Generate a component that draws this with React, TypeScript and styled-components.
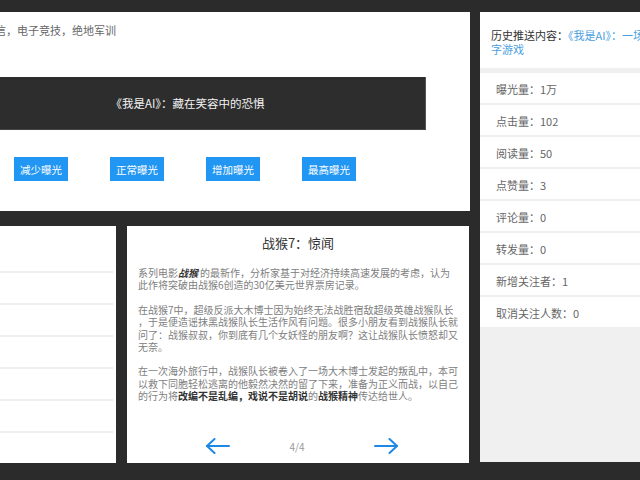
import React from "react";
import styled, { createGlobalStyle } from "styled-components";

const GlobalStyle = createGlobalStyle`
  html, body {
    margin: 0;
    padding: 0;
    background: #2b2b2b;
    overflow: hidden;
  }
  body {
    font-family: "Noto Sans CJK SC", "Noto Sans", sans-serif;
  }
`;

const Page = styled.div`
  width: 640px;
  height: 480px;
  overflow: hidden;
  background: #2b2b2b;
`;

const Layout = styled.div`
  display: grid;
  grid-template-columns: 520px 190px;
  column-gap: 10px;
  margin-left: -50px;
  padding-top: 12px;
`;

const MainColumn = styled.div`
  display: flex;
  flex-direction: column;
  gap: 15px;
`;

const TopPanel = styled.section`
  height: 199px;
  background: #fff;
  overflow: hidden;
  display: flex;
  flex-direction: column;
`;

const Tags = styled.div`
  padding: 11px 0 0 34px;
  font-size: 11px;
  line-height: 14px;
  color: #666;
  white-space: nowrap;
`;

const TitleBar = styled.div`
  margin-top: 40px;
  width: 476px;
  height: 53px;
  box-sizing: border-box;
  background: #2d2d2d;
  border-right: 1px solid #555;
  border-bottom: 1px solid #444;
  display: flex;
  align-items: center;
  justify-content: center;
  color: #f2f2f2;
  font-size: 11.5px;
`;

const ButtonRow = styled.div`
  display: flex;
  gap: 42px;
  padding-left: 64px;
  margin-top: 27px;
`;

const ExposureButton = styled.button`
  width: 54px;
  height: 24px;
  padding: 0;
  border: none;
  background: #2196f3;
  color: #fff;
  font-family: inherit;
  font-size: 10.5px;
  cursor: pointer;
`;

const BottomRow = styled.div`
  display: grid;
  grid-template-columns: 166px 342px;
  column-gap: 11px;
  height: 236px;
`;

const ListPanel = styled.section`
  background: #fff;
  display: flex;
  flex-direction: column;
`;

const ListHead = styled.div`
  height: 45px;
  border-bottom: 2px solid #eeeeee;
  margin-right: 3px;
`;

const ListRow = styled.div<{ $last?: boolean }>`
  height: 30px;
  margin-right: 3px;
  border-bottom: ${(p) => (p.$last ? "none" : "2px solid #eeeeee")};
`;

const Article = styled.section`
  background: #fff;
  padding: 8px 11px 0;
  display: flex;
  flex-direction: column;
  box-sizing: border-box;
`;

const ArticleTitle = styled.h2`
  margin: 0 0 15px;
  text-align: center;
  font-size: 13px;
  line-height: 18px;
  font-weight: normal;
  color: #333;
`;

const Para = styled.p`
  margin: 0 0 12px;
  font-size: 10px;
  line-height: 12.4px;
  color: #808080;
  white-space: nowrap;
`;

const Strong = styled.b<{ $italic?: boolean }>`
  color: #333;
  font-weight: bold;
  font-style: ${(p) => (p.$italic ? "italic" : "normal")};
  margin-right: ${(p) => (p.$italic ? "2px" : "0")};
`;

const Pager = styled.div`
  margin-top: auto;
  height: 34px;
  display: flex;
  align-items: center;
  padding-left: 67px;
`;

const PageNo = styled.span`
  font-size: 10px;
  color: #999;
  width: 20px;
  text-align: center;
  margin: 0 66px 0 56px;
`;

const ArrowButton = styled.button`
  background: none;
  border: none;
  padding: 0;
  width: 26px;
  height: 18px;
  display: flex;
  align-items: center;
  justify-content: center;
  cursor: pointer;
`;

const SidePanel = styled.aside`
  height: 450px;
  background: #f0f0f0;
  display: flex;
  flex-direction: column;
  gap: 2px;
`;

const History = styled.div`
  background: #fff;
  padding: 16px 11px 12px;
  font-size: 11px;
  line-height: 14px;
  color: #333;
  margin-bottom: 3px;
`;

const HistoryLink = styled.span`
  color: #4a9fe0;
`;

const StatRow = styled.div`
  height: 30px;
  background: #fff;
  display: flex;
  align-items: center;
  padding: 1px 0 0 16px;
  box-sizing: border-box;
  font-size: 11px;
  color: #666;
`;

const Arrow: React.FC<{ dir: "left" | "right" }> = ({ dir }) => (
  <svg width="26" height="16" viewBox="0 0 26 16" fill="none">
    <g
      stroke="#1e88e5"
      strokeWidth="2"
      strokeLinecap="round"
      strokeLinejoin="round"
      transform={dir === "right" ? "matrix(-1 0 0 1 26 0)" : undefined}
    >
      <path d="M2 8 H24" />
      <path d="M9.5 1 L2 8 L9.5 15" />
    </g>
  </svg>
);

const stats = [
  "曝光量：1万",
  "点击量：102",
  "阅读量：50",
  "点赞量：3",
  "评论量：0",
  "转发量：0",
  "新增关注者：1",
  "取消关注人数：0",
];

const levels = ["减少曝光", "正常曝光", "增加曝光", "最高曝光"];

const App: React.FC = () => {
  return (
    <Page>
      <GlobalStyle />
      <Layout>
        <MainColumn>
          <TopPanel>
            <Tags>通信，电子竞技，绝地军训</Tags>
            <TitleBar>《我是AI》：藏在笑容中的恐惧</TitleBar>
            <ButtonRow>
              {levels.map((l) => (
                <ExposureButton key={l}>{l}</ExposureButton>
              ))}
            </ButtonRow>
          </TopPanel>
          <BottomRow>
            <ListPanel>
              <ListHead />
              {[0, 1, 2, 3, 4, 5].map((i) => (
                <ListRow key={i} $last={i === 5} />
              ))}
            </ListPanel>
            <Article>
              <ArticleTitle>战猴7：惊闻</ArticleTitle>
              <Para>
                系列电影<Strong $italic>战猴</Strong>的最新作，分析家基于对经济持续高速发展的考虑，认为
                <br />
                此作将突破由战猴6创造的30亿美元世界票房记录。
              </Para>
              <Para>
                在战猴7中，超级反派大木博士因为始终无法战胜宿敌超级英雄战猴队长
                <br />
                ，于是便造谣抹黑战猴队长生活作风有问题。很多小朋友看到战猴队长就
                <br />
                问了：战猴叔叔，你到底有几个女妖怪的朋友啊？这让战猴队长愤怒却又
                <br />
                无奈。
              </Para>
              <Para>
                在一次海外旅行中，战猴队长被卷入了一场大木博士发起的叛乱中，本可
                <br />
                以救下同胞轻松逃离的他毅然决然的留了下来，准备为正义而战，以自己
                <br />
                的行为将<Strong>改编不是乱编，戏说不是胡说</Strong>的<Strong>战猴精神</Strong>传达给世人。
              </Para>
              <Pager>
                <ArrowButton>
                  <Arrow dir="left" />
                </ArrowButton>
                <PageNo>4/4</PageNo>
                <ArrowButton>
                  <Arrow dir="right" />
                </ArrowButton>
              </Pager>
            </Article>
          </BottomRow>
        </MainColumn>
        <SidePanel>
          <History>
            历史推送内容：<HistoryLink>《我是AI》：一场文字游戏</HistoryLink>
          </History>
          {stats.map((s) => (
            <StatRow key={s}>{s}</StatRow>
          ))}
        </SidePanel>
      </Layout>
    </Page>
  );
};

export default App;
